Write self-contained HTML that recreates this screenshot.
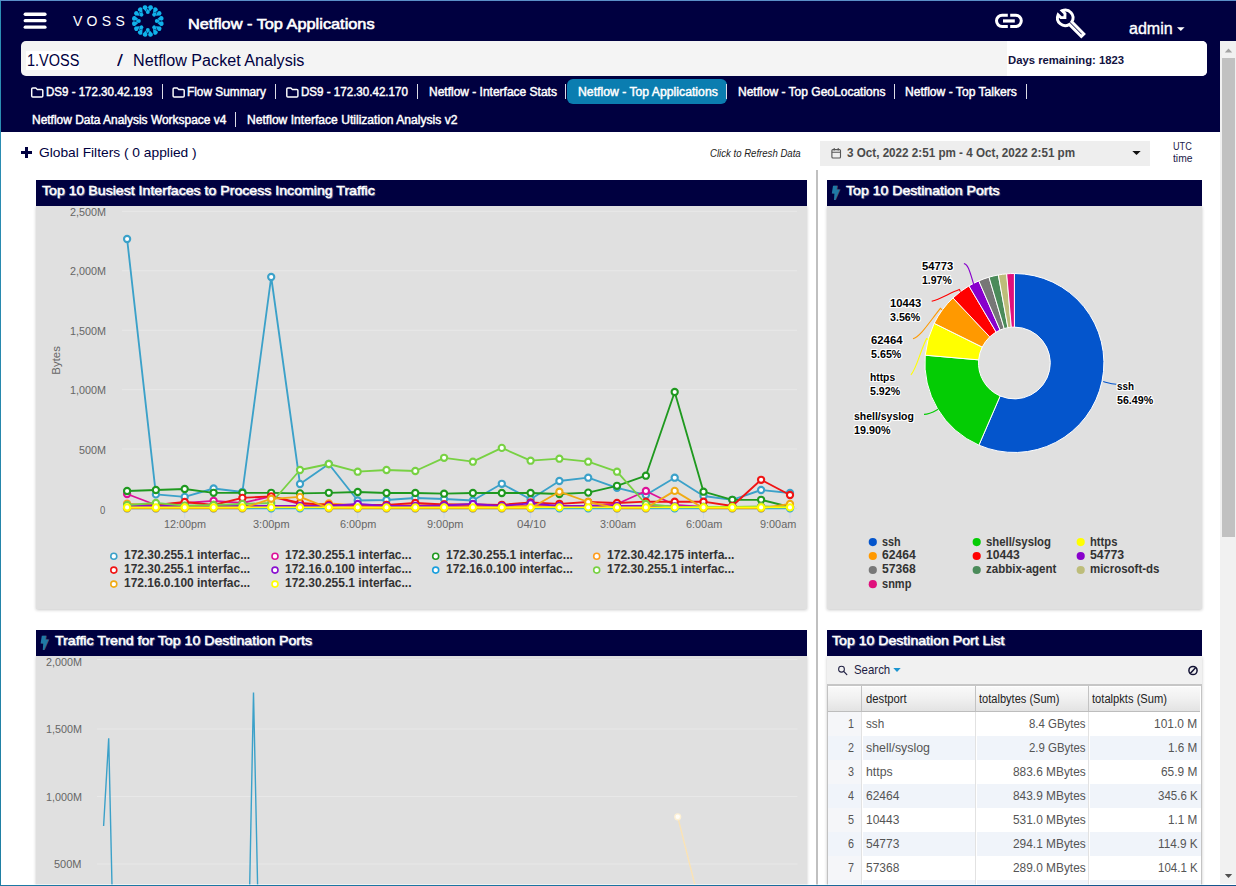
<!DOCTYPE html>
<html>
<head>
<meta charset="utf-8">
<title>Netflow - Top Applications</title>
<style>
*{box-sizing:border-box;margin:0;padding:0}
html,body{width:1236px;height:886px;overflow:hidden;background:#fff}
body{font-family:"Liberation Sans",sans-serif;position:relative;color:#222}
.abs{position:absolute}
.t{position:absolute;white-space:pre;line-height:1;z-index:20}
svg{position:absolute;left:0;top:0;overflow:visible}
svg text{font-family:"Liberation Sans",sans-serif}
.sep{position:absolute;width:1px;background:#dcdce6}
.ptitle{position:absolute;background:#000040;height:26px;z-index:3}
.pbody{position:absolute;background:#e0e0e0;box-shadow:0 1px 3px rgba(0,0,0,.22);z-index:2}
</style>
</head>
<body>
<div class="abs" style="left:1px;top:1px;width:1235px;height:40px;background:#000040"></div>
<div class="abs" style="left:1px;top:41px;width:1220px;height:91px;background:#000040"></div>
<div class="abs" style="left:21px;top:41px;width:1186px;height:35px;background:#f4f4f4;border-radius:5px"></div>
<div class="abs" style="left:1007px;top:41px;width:200px;height:35px;background:#fff;border-radius:0 5px 5px 0"></div>
<div class="abs" style="left:26.1px;top:50.7px;width:53.1px;height:19.1px;background:#fff"></div>
<div class="abs" style="left:567px;top:78.5px;width:160px;height:25px;background:#0b7db0;border-radius:6px"></div>
<div class="sep" style="left:162.0px;top:84px;height:15px"></div>
<div class="sep" style="left:274.8px;top:84px;height:15px"></div>
<div class="sep" style="left:416.9px;top:84px;height:15px"></div>
<div class="sep" style="left:565.4px;top:84px;height:15px"></div>
<div class="sep" style="left:726.1px;top:84px;height:15px"></div>
<div class="sep" style="left:894.3px;top:84px;height:15px"></div>
<div class="sep" style="left:1025.9px;top:84px;height:15px"></div>
<div class="sep" style="left:235.2px;top:112px;height:15px"></div>

<svg width="1236" height="140" style="z-index:5">
  <rect x="23.6" y="12.6" width="23" height="3.3" rx="1.65" fill="#fff"/>
  <rect x="23.6" y="19.05" width="23" height="3.3" rx="1.65" fill="#fff"/>
  <rect x="23.6" y="25.5" width="23" height="3.3" rx="1.65" fill="#fff"/>
  <path d="M149.63 11.78 L152.81 8.13 A2.40 2.40 0 1 0 148.10 7.19 Z" fill="#10b2ea"/>
<path d="M153.02 13.18 L157.35 11.03 A2.40 2.40 0 1 0 153.36 8.36 Z" fill="#10b2ea"/>
<path d="M155.62 15.78 L160.44 15.44 A2.40 2.40 0 1 0 157.77 11.45 Z" fill="#10b2ea"/>
<path d="M157.02 19.17 L161.61 20.70 A2.40 2.40 0 1 0 160.67 15.99 Z" fill="#10b2ea"/>
<path d="M157.02 22.83 L160.67 26.01 A2.40 2.40 0 1 0 161.61 21.30 Z" fill="#10b2ea"/>
<path d="M155.62 26.22 L157.77 30.55 A2.40 2.40 0 1 0 160.44 26.56 Z" fill="#10b2ea"/>
<path d="M153.02 28.82 L153.36 33.64 A2.40 2.40 0 1 0 157.35 30.97 Z" fill="#10b2ea"/>
<path d="M149.63 30.22 L148.10 34.81 A2.40 2.40 0 1 0 152.81 33.87 Z" fill="#10b2ea"/>
<path d="M145.97 30.22 L142.79 33.87 A2.40 2.40 0 1 0 147.50 34.81 Z" fill="#10b2ea"/>
<path d="M142.58 28.82 L138.25 30.97 A2.40 2.40 0 1 0 142.24 33.64 Z" fill="#10b2ea"/>
<path d="M139.98 26.22 L135.16 26.56 A2.40 2.40 0 1 0 137.83 30.55 Z" fill="#10b2ea"/>
<path d="M138.58 22.83 L133.99 21.30 A2.40 2.40 0 1 0 134.93 26.01 Z" fill="#10b2ea"/>
<path d="M138.58 19.17 L134.93 15.99 A2.40 2.40 0 1 0 133.99 20.70 Z" fill="#10b2ea"/>
<path d="M139.98 15.78 L137.83 11.45 A2.40 2.40 0 1 0 135.16 15.44 Z" fill="#10b2ea"/>
<path d="M142.58 13.18 L142.24 8.36 A2.40 2.40 0 1 0 138.25 11.03 Z" fill="#10b2ea"/>
<path d="M145.97 11.78 L147.50 7.19 A2.40 2.40 0 1 0 142.79 8.13 Z" fill="#10b2ea"/>
<path d="M147.80 8.40 L149.80 12.00 A2.00 2.00 0 1 1 145.80 12.00 Z" fill="#10b2ea"/>
<path d="M156.71 12.09 L155.58 16.05 A2.00 2.00 0 1 1 152.75 13.22 Z" fill="#10b2ea"/>
<path d="M160.40 21.00 L156.80 23.00 A2.00 2.00 0 1 1 156.80 19.00 Z" fill="#10b2ea"/>
<path d="M156.71 29.91 L152.75 28.78 A2.00 2.00 0 1 1 155.58 25.95 Z" fill="#10b2ea"/>
<path d="M147.80 33.60 L145.80 30.00 A2.00 2.00 0 1 1 149.80 30.00 Z" fill="#10b2ea"/>
<path d="M138.89 29.91 L140.02 25.95 A2.00 2.00 0 1 1 142.85 28.78 Z" fill="#10b2ea"/>
<path d="M135.20 21.00 L138.80 19.00 A2.00 2.00 0 1 1 138.80 23.00 Z" fill="#10b2ea"/>
<path d="M138.89 12.09 L142.85 13.22 A2.00 2.00 0 1 1 140.02 16.05 Z" fill="#10b2ea"/>
  <g fill="none" stroke="#fff" stroke-width="3" stroke-linecap="butt">
    <path d="M1007.8 15.2 H1002.15 A5.65 5.65 0 0 0 1002.15 26.5 H1007.8"/>
    <path d="M1010.2 15.2 H1015.65 A5.65 5.65 0 0 1 1015.65 26.5 H1010.2"/>
    <path d="M1003 20.95 H1014.8" stroke-width="3.2"/>
  </g>
  <g transform="translate(1065.2 17.8) rotate(-45)">
    <path d="M-2.9 -7.19 L-2.9 -3.2 L0 -0.4 L2.9 -3.2 L2.9 -7.19 A7.75 7.75 0 0 1 1.8 7.54 L1.8 24.6 L-1.8 24.6 L-1.8 7.54 A7.75 7.75 0 0 1 -2.9 -7.19 Z" fill="none" stroke="#fff" stroke-width="2.9" stroke-linejoin="miter"/>
  </g>
  <path d="M1177 27.2 L1184.6 27.2 L1180.8 31 Z" fill="#fff"/>
  <path d="M31.7 89.0 q0 -1.1 1.1 -1.1 h3 l1.3 1.5 h4.6 q1.1 0 1.1 1.1 v5.4 q0 1.1 -1.1 1.1 h-8.9 q-1.1 0 -1.1 -1.1 z" fill="none" stroke="#fff" stroke-width="1.45" stroke-linejoin="round"/>
  <path d="M173.1 89.0 q0 -1.1 1.1 -1.1 h3 l1.3 1.5 h4.6 q1.1 0 1.1 1.1 v5.4 q0 1.1 -1.1 1.1 h-8.9 q-1.1 0 -1.1 -1.1 z" fill="none" stroke="#fff" stroke-width="1.45" stroke-linejoin="round"/>
  <path d="M286.8 89.0 q0 -1.1 1.1 -1.1 h3 l1.3 1.5 h4.6 q1.1 0 1.1 1.1 v5.4 q0 1.1 -1.1 1.1 h-8.9 q-1.1 0 -1.1 -1.1 z" fill="none" stroke="#fff" stroke-width="1.45" stroke-linejoin="round"/>
</svg>
<div class="abs" style="left:21px;top:151.4px;width:11px;height:2.5px;background:#000040"></div>
<div class="abs" style="left:25.3px;top:147.2px;width:2.5px;height:11px;background:#000040"></div>
<div class="abs" style="left:820px;top:140.8px;width:330px;height:25.2px;background:#eeeeee"></div>
<svg width="1236" height="200" style="z-index:6">
  <g fill="none" stroke="#555" stroke-width="1.1">
    <rect x="831.9" y="149.6" width="8.6" height="8.4" rx="1"/>
    <path d="M831.9 152.3 H840.5 M834.2 148 V150.4 M838.2 148 V150.4"/>
  </g>
  <path d="M1132.3 150.9 L1140.7 150.9 L1136.5 155.1 Z" fill="#111"/>
</svg>
<div class="abs" style="left:816.1px;top:170px;width:1.7px;height:716px;background:#c0c0c0"></div>
<div class="pbody" style="left:36px;top:206px;width:771px;height:403px"></div>
<div class="ptitle" style="left:36px;top:180px;width:771px"></div>
<div class="pbody" style="left:827px;top:206px;width:375px;height:403px"></div>
<div class="ptitle" style="left:827px;top:180px;width:375px"></div>
<div class="pbody" style="left:36px;top:656px;width:771px;height:300px"></div>
<div class="ptitle" style="left:36px;top:630px;width:771px"></div>
<div class="pbody" style="left:827px;top:656px;width:375px;height:300px"></div>
<div class="ptitle" style="left:827px;top:630px;width:375px"></div>
<svg width="1236" height="886" style="z-index:6"><path d="M833.8 185.8 L838.0 185.8 L837.4 189.6 L840.6 189.6 L836.0 200.0 L834.8 200.0 L835.2 193.4 L832.6 193.4 Z" fill="#5a4458"/><path d="M833.0 185.8 L837.2 185.8 L836.6 189.6 L839.8 189.6 L835.2 200.0 L834.0 200.0 L834.4 193.4 L831.8 193.4 Z" fill="#1f7aa6"/><path d="M42.6 635.8 L46.8 635.8 L46.2 639.6 L49.4 639.6 L44.8 650.0 L43.6 650.0 L44.0 643.4 L41.4 643.4 Z" fill="#5a4458"/><path d="M41.8 635.8 L46.0 635.8 L45.4 639.6 L48.6 639.6 L44.0 650.0 L42.8 650.0 L43.2 643.4 L40.6 643.4 Z" fill="#1f7aa6"/></svg>
<svg width="1236" height="886" style="z-index:8">
<path d="M122 449.0 H797" stroke="#e8e8e8" stroke-width="1" fill="none"/>
<path d="M122 389.6 H797" stroke="#e8e8e8" stroke-width="1" fill="none"/>
<path d="M122 330.2 H797" stroke="#e8e8e8" stroke-width="1" fill="none"/>
<path d="M122 270.8 H797" stroke="#e8e8e8" stroke-width="1" fill="none"/>
<path d="M122 211.4 H797" stroke="#e8e8e8" stroke-width="1" fill="none"/>
<path d="M122 508.4 H797" stroke="#ccd6eb" stroke-width="1" fill="none"/>
<path d="M184.7 508.4 V518.4" stroke="#ccd6eb" stroke-width="1" fill="none"/>
<path d="M271.2 508.4 V518.4" stroke="#ccd6eb" stroke-width="1" fill="none"/>
<path d="M357.7 508.4 V518.4" stroke="#ccd6eb" stroke-width="1" fill="none"/>
<path d="M444.1 508.4 V518.4" stroke="#ccd6eb" stroke-width="1" fill="none"/>
<path d="M530.6 508.4 V518.4" stroke="#ccd6eb" stroke-width="1" fill="none"/>
<path d="M617.0 508.4 V518.4" stroke="#ccd6eb" stroke-width="1" fill="none"/>
<path d="M703.5 508.4 V518.4" stroke="#ccd6eb" stroke-width="1" fill="none"/>
<path d="M790.0 508.4 V518.4" stroke="#ccd6eb" stroke-width="1" fill="none"/>
<text x="0" y="0" transform="translate(60.4 360.4) rotate(-90)" text-anchor="middle" font-size="11.5" fill="#666" textLength="28.5" lengthAdjust="spacingAndGlyphs">Bytes</text>
<path d="M127.1 239.0 L155.9 494.4 L184.7 496.9 L213.6 488.5 L242.4 492.0 L271.2 277.0 L300.0 484.0 L328.8 464.0 L357.7 500.5 L386.5 500.0 L415.3 498.0 L444.1 499.0 L472.9 500.5 L501.8 483.8 L530.6 499.3 L559.4 481.0 L588.2 477.7 L617.0 487.8 L645.9 495.0 L674.7 477.7 L703.5 496.0 L732.3 499.8 L761.1 490.0 L790.0 493.0" fill="none" stroke="#3ba1c9" stroke-width="1.85" stroke-linejoin="round" stroke-linecap="round"/>
<circle cx="127.1" cy="239.0" r="3.1" fill="#fff" stroke="#3ba1c9" stroke-width="2.1"/>
<circle cx="155.9" cy="494.4" r="3.1" fill="#fff" stroke="#3ba1c9" stroke-width="2.1"/>
<circle cx="184.7" cy="496.9" r="3.1" fill="#fff" stroke="#3ba1c9" stroke-width="2.1"/>
<circle cx="213.6" cy="488.5" r="3.1" fill="#fff" stroke="#3ba1c9" stroke-width="2.1"/>
<circle cx="242.4" cy="492.0" r="3.1" fill="#fff" stroke="#3ba1c9" stroke-width="2.1"/>
<circle cx="271.2" cy="277.0" r="3.1" fill="#fff" stroke="#3ba1c9" stroke-width="2.1"/>
<circle cx="300.0" cy="484.0" r="3.1" fill="#fff" stroke="#3ba1c9" stroke-width="2.1"/>
<circle cx="328.8" cy="464.0" r="3.1" fill="#fff" stroke="#3ba1c9" stroke-width="2.1"/>
<circle cx="357.7" cy="500.5" r="3.1" fill="#fff" stroke="#3ba1c9" stroke-width="2.1"/>
<circle cx="386.5" cy="500.0" r="3.1" fill="#fff" stroke="#3ba1c9" stroke-width="2.1"/>
<circle cx="415.3" cy="498.0" r="3.1" fill="#fff" stroke="#3ba1c9" stroke-width="2.1"/>
<circle cx="444.1" cy="499.0" r="3.1" fill="#fff" stroke="#3ba1c9" stroke-width="2.1"/>
<circle cx="472.9" cy="500.5" r="3.1" fill="#fff" stroke="#3ba1c9" stroke-width="2.1"/>
<circle cx="501.8" cy="483.8" r="3.1" fill="#fff" stroke="#3ba1c9" stroke-width="2.1"/>
<circle cx="530.6" cy="499.3" r="3.1" fill="#fff" stroke="#3ba1c9" stroke-width="2.1"/>
<circle cx="559.4" cy="481.0" r="3.1" fill="#fff" stroke="#3ba1c9" stroke-width="2.1"/>
<circle cx="588.2" cy="477.7" r="3.1" fill="#fff" stroke="#3ba1c9" stroke-width="2.1"/>
<circle cx="617.0" cy="487.8" r="3.1" fill="#fff" stroke="#3ba1c9" stroke-width="2.1"/>
<circle cx="645.9" cy="495.0" r="3.1" fill="#fff" stroke="#3ba1c9" stroke-width="2.1"/>
<circle cx="674.7" cy="477.7" r="3.1" fill="#fff" stroke="#3ba1c9" stroke-width="2.1"/>
<circle cx="703.5" cy="496.0" r="3.1" fill="#fff" stroke="#3ba1c9" stroke-width="2.1"/>
<circle cx="732.3" cy="499.8" r="3.1" fill="#fff" stroke="#3ba1c9" stroke-width="2.1"/>
<circle cx="761.1" cy="490.0" r="3.1" fill="#fff" stroke="#3ba1c9" stroke-width="2.1"/>
<circle cx="790.0" cy="493.0" r="3.1" fill="#fff" stroke="#3ba1c9" stroke-width="2.1"/>
<path d="M127.1 494.0 L155.9 505.0 L184.7 503.0 L213.6 500.8 L242.4 503.0 L271.2 496.3 L300.0 504.0 L328.8 505.5 L357.7 506.0 L386.5 506.0 L415.3 506.0 L444.1 506.0 L472.9 506.0 L501.8 506.0 L530.6 506.0 L559.4 506.0 L588.2 506.0 L617.0 504.0 L645.9 491.0 L674.7 505.0 L703.5 507.0 L732.3 507.0 L761.1 507.0 L790.0 507.0" fill="none" stroke="#dd1199" stroke-width="1.85" stroke-linejoin="round" stroke-linecap="round"/>
<circle cx="127.1" cy="494.0" r="3.1" fill="#fff" stroke="#dd1199" stroke-width="2.1"/>
<circle cx="155.9" cy="505.0" r="3.1" fill="#fff" stroke="#dd1199" stroke-width="2.1"/>
<circle cx="184.7" cy="503.0" r="3.1" fill="#fff" stroke="#dd1199" stroke-width="2.1"/>
<circle cx="213.6" cy="500.8" r="3.1" fill="#fff" stroke="#dd1199" stroke-width="2.1"/>
<circle cx="242.4" cy="503.0" r="3.1" fill="#fff" stroke="#dd1199" stroke-width="2.1"/>
<circle cx="271.2" cy="496.3" r="3.1" fill="#fff" stroke="#dd1199" stroke-width="2.1"/>
<circle cx="300.0" cy="504.0" r="3.1" fill="#fff" stroke="#dd1199" stroke-width="2.1"/>
<circle cx="328.8" cy="505.5" r="3.1" fill="#fff" stroke="#dd1199" stroke-width="2.1"/>
<circle cx="357.7" cy="506.0" r="3.1" fill="#fff" stroke="#dd1199" stroke-width="2.1"/>
<circle cx="386.5" cy="506.0" r="3.1" fill="#fff" stroke="#dd1199" stroke-width="2.1"/>
<circle cx="415.3" cy="506.0" r="3.1" fill="#fff" stroke="#dd1199" stroke-width="2.1"/>
<circle cx="444.1" cy="506.0" r="3.1" fill="#fff" stroke="#dd1199" stroke-width="2.1"/>
<circle cx="472.9" cy="506.0" r="3.1" fill="#fff" stroke="#dd1199" stroke-width="2.1"/>
<circle cx="501.8" cy="506.0" r="3.1" fill="#fff" stroke="#dd1199" stroke-width="2.1"/>
<circle cx="530.6" cy="506.0" r="3.1" fill="#fff" stroke="#dd1199" stroke-width="2.1"/>
<circle cx="559.4" cy="506.0" r="3.1" fill="#fff" stroke="#dd1199" stroke-width="2.1"/>
<circle cx="588.2" cy="506.0" r="3.1" fill="#fff" stroke="#dd1199" stroke-width="2.1"/>
<circle cx="617.0" cy="504.0" r="3.1" fill="#fff" stroke="#dd1199" stroke-width="2.1"/>
<circle cx="645.9" cy="491.0" r="3.1" fill="#fff" stroke="#dd1199" stroke-width="2.1"/>
<circle cx="674.7" cy="505.0" r="3.1" fill="#fff" stroke="#dd1199" stroke-width="2.1"/>
<circle cx="703.5" cy="507.0" r="3.1" fill="#fff" stroke="#dd1199" stroke-width="2.1"/>
<circle cx="732.3" cy="507.0" r="3.1" fill="#fff" stroke="#dd1199" stroke-width="2.1"/>
<circle cx="761.1" cy="507.0" r="3.1" fill="#fff" stroke="#dd1199" stroke-width="2.1"/>
<circle cx="790.0" cy="507.0" r="3.1" fill="#fff" stroke="#dd1199" stroke-width="2.1"/>
<path d="M127.1 491.0 L155.9 490.0 L184.7 489.0 L213.6 492.8 L242.4 492.8 L271.2 492.8 L300.0 493.4 L328.8 492.8 L357.7 492.0 L386.5 493.0 L415.3 493.0 L444.1 493.7 L472.9 493.0 L501.8 493.0 L530.6 493.0 L559.4 494.0 L588.2 492.6 L617.0 485.8 L645.9 475.7 L674.7 392.0 L703.5 491.7 L732.3 499.8 L761.1 499.8 L790.0 507.0" fill="none" stroke="#1f991f" stroke-width="1.85" stroke-linejoin="round" stroke-linecap="round"/>
<circle cx="127.1" cy="491.0" r="3.1" fill="#fff" stroke="#1f991f" stroke-width="2.1"/>
<circle cx="155.9" cy="490.0" r="3.1" fill="#fff" stroke="#1f991f" stroke-width="2.1"/>
<circle cx="184.7" cy="489.0" r="3.1" fill="#fff" stroke="#1f991f" stroke-width="2.1"/>
<circle cx="213.6" cy="492.8" r="3.1" fill="#fff" stroke="#1f991f" stroke-width="2.1"/>
<circle cx="242.4" cy="492.8" r="3.1" fill="#fff" stroke="#1f991f" stroke-width="2.1"/>
<circle cx="271.2" cy="492.8" r="3.1" fill="#fff" stroke="#1f991f" stroke-width="2.1"/>
<circle cx="300.0" cy="493.4" r="3.1" fill="#fff" stroke="#1f991f" stroke-width="2.1"/>
<circle cx="328.8" cy="492.8" r="3.1" fill="#fff" stroke="#1f991f" stroke-width="2.1"/>
<circle cx="357.7" cy="492.0" r="3.1" fill="#fff" stroke="#1f991f" stroke-width="2.1"/>
<circle cx="386.5" cy="493.0" r="3.1" fill="#fff" stroke="#1f991f" stroke-width="2.1"/>
<circle cx="415.3" cy="493.0" r="3.1" fill="#fff" stroke="#1f991f" stroke-width="2.1"/>
<circle cx="444.1" cy="493.7" r="3.1" fill="#fff" stroke="#1f991f" stroke-width="2.1"/>
<circle cx="472.9" cy="493.0" r="3.1" fill="#fff" stroke="#1f991f" stroke-width="2.1"/>
<circle cx="501.8" cy="493.0" r="3.1" fill="#fff" stroke="#1f991f" stroke-width="2.1"/>
<circle cx="530.6" cy="493.0" r="3.1" fill="#fff" stroke="#1f991f" stroke-width="2.1"/>
<circle cx="559.4" cy="494.0" r="3.1" fill="#fff" stroke="#1f991f" stroke-width="2.1"/>
<circle cx="588.2" cy="492.6" r="3.1" fill="#fff" stroke="#1f991f" stroke-width="2.1"/>
<circle cx="617.0" cy="485.8" r="3.1" fill="#fff" stroke="#1f991f" stroke-width="2.1"/>
<circle cx="645.9" cy="475.7" r="3.1" fill="#fff" stroke="#1f991f" stroke-width="2.1"/>
<circle cx="674.7" cy="392.0" r="3.1" fill="#fff" stroke="#1f991f" stroke-width="2.1"/>
<circle cx="703.5" cy="491.7" r="3.1" fill="#fff" stroke="#1f991f" stroke-width="2.1"/>
<circle cx="732.3" cy="499.8" r="3.1" fill="#fff" stroke="#1f991f" stroke-width="2.1"/>
<circle cx="761.1" cy="499.8" r="3.1" fill="#fff" stroke="#1f991f" stroke-width="2.1"/>
<circle cx="790.0" cy="507.0" r="3.1" fill="#fff" stroke="#1f991f" stroke-width="2.1"/>
<path d="M127.1 503.7 L155.9 506.0 L184.7 506.0 L213.6 506.0 L242.4 506.0 L271.2 506.0 L300.0 506.0 L328.8 503.5 L357.7 505.5 L386.5 505.0 L415.3 505.5 L444.1 504.5 L472.9 505.5 L501.8 505.5 L530.6 506.5 L559.4 506.5 L588.2 506.5 L617.0 507.0 L645.9 507.0 L674.7 507.0 L703.5 507.0 L732.3 507.0 L761.1 507.0 L790.0 507.0" fill="none" stroke="#ff9d1e" stroke-width="1.85" stroke-linejoin="round" stroke-linecap="round"/>
<circle cx="127.1" cy="503.7" r="3.1" fill="#fff" stroke="#ff9d1e" stroke-width="2.1"/>
<circle cx="155.9" cy="506.0" r="3.1" fill="#fff" stroke="#ff9d1e" stroke-width="2.1"/>
<circle cx="184.7" cy="506.0" r="3.1" fill="#fff" stroke="#ff9d1e" stroke-width="2.1"/>
<circle cx="213.6" cy="506.0" r="3.1" fill="#fff" stroke="#ff9d1e" stroke-width="2.1"/>
<circle cx="242.4" cy="506.0" r="3.1" fill="#fff" stroke="#ff9d1e" stroke-width="2.1"/>
<circle cx="271.2" cy="506.0" r="3.1" fill="#fff" stroke="#ff9d1e" stroke-width="2.1"/>
<circle cx="300.0" cy="506.0" r="3.1" fill="#fff" stroke="#ff9d1e" stroke-width="2.1"/>
<circle cx="328.8" cy="503.5" r="3.1" fill="#fff" stroke="#ff9d1e" stroke-width="2.1"/>
<circle cx="357.7" cy="505.5" r="3.1" fill="#fff" stroke="#ff9d1e" stroke-width="2.1"/>
<circle cx="386.5" cy="505.0" r="3.1" fill="#fff" stroke="#ff9d1e" stroke-width="2.1"/>
<circle cx="415.3" cy="505.5" r="3.1" fill="#fff" stroke="#ff9d1e" stroke-width="2.1"/>
<circle cx="444.1" cy="504.5" r="3.1" fill="#fff" stroke="#ff9d1e" stroke-width="2.1"/>
<circle cx="472.9" cy="505.5" r="3.1" fill="#fff" stroke="#ff9d1e" stroke-width="2.1"/>
<circle cx="501.8" cy="505.5" r="3.1" fill="#fff" stroke="#ff9d1e" stroke-width="2.1"/>
<circle cx="530.6" cy="506.5" r="3.1" fill="#fff" stroke="#ff9d1e" stroke-width="2.1"/>
<circle cx="559.4" cy="506.5" r="3.1" fill="#fff" stroke="#ff9d1e" stroke-width="2.1"/>
<circle cx="588.2" cy="506.5" r="3.1" fill="#fff" stroke="#ff9d1e" stroke-width="2.1"/>
<circle cx="617.0" cy="507.0" r="3.1" fill="#fff" stroke="#ff9d1e" stroke-width="2.1"/>
<circle cx="645.9" cy="507.0" r="3.1" fill="#fff" stroke="#ff9d1e" stroke-width="2.1"/>
<circle cx="674.7" cy="507.0" r="3.1" fill="#fff" stroke="#ff9d1e" stroke-width="2.1"/>
<circle cx="703.5" cy="507.0" r="3.1" fill="#fff" stroke="#ff9d1e" stroke-width="2.1"/>
<circle cx="732.3" cy="507.0" r="3.1" fill="#fff" stroke="#ff9d1e" stroke-width="2.1"/>
<circle cx="761.1" cy="507.0" r="3.1" fill="#fff" stroke="#ff9d1e" stroke-width="2.1"/>
<circle cx="790.0" cy="507.0" r="3.1" fill="#fff" stroke="#ff9d1e" stroke-width="2.1"/>
<path d="M127.1 505.6 L155.9 505.0 L184.7 502.0 L213.6 505.0 L242.4 497.9 L271.2 496.3 L300.0 503.0 L328.8 505.0 L357.7 504.8 L386.5 504.8 L415.3 503.0 L444.1 504.5 L472.9 504.5 L501.8 504.8 L530.6 502.4 L559.4 503.8 L588.2 502.0 L617.0 503.0 L645.9 501.7 L674.7 501.7 L703.5 501.7 L732.3 506.0 L761.1 479.8 L790.0 495.0" fill="none" stroke="#f01414" stroke-width="1.85" stroke-linejoin="round" stroke-linecap="round"/>
<circle cx="127.1" cy="505.6" r="3.1" fill="#fff" stroke="#f01414" stroke-width="2.1"/>
<circle cx="155.9" cy="505.0" r="3.1" fill="#fff" stroke="#f01414" stroke-width="2.1"/>
<circle cx="184.7" cy="502.0" r="3.1" fill="#fff" stroke="#f01414" stroke-width="2.1"/>
<circle cx="213.6" cy="505.0" r="3.1" fill="#fff" stroke="#f01414" stroke-width="2.1"/>
<circle cx="242.4" cy="497.9" r="3.1" fill="#fff" stroke="#f01414" stroke-width="2.1"/>
<circle cx="271.2" cy="496.3" r="3.1" fill="#fff" stroke="#f01414" stroke-width="2.1"/>
<circle cx="300.0" cy="503.0" r="3.1" fill="#fff" stroke="#f01414" stroke-width="2.1"/>
<circle cx="328.8" cy="505.0" r="3.1" fill="#fff" stroke="#f01414" stroke-width="2.1"/>
<circle cx="357.7" cy="504.8" r="3.1" fill="#fff" stroke="#f01414" stroke-width="2.1"/>
<circle cx="386.5" cy="504.8" r="3.1" fill="#fff" stroke="#f01414" stroke-width="2.1"/>
<circle cx="415.3" cy="503.0" r="3.1" fill="#fff" stroke="#f01414" stroke-width="2.1"/>
<circle cx="444.1" cy="504.5" r="3.1" fill="#fff" stroke="#f01414" stroke-width="2.1"/>
<circle cx="472.9" cy="504.5" r="3.1" fill="#fff" stroke="#f01414" stroke-width="2.1"/>
<circle cx="501.8" cy="504.8" r="3.1" fill="#fff" stroke="#f01414" stroke-width="2.1"/>
<circle cx="530.6" cy="502.4" r="3.1" fill="#fff" stroke="#f01414" stroke-width="2.1"/>
<circle cx="559.4" cy="503.8" r="3.1" fill="#fff" stroke="#f01414" stroke-width="2.1"/>
<circle cx="588.2" cy="502.0" r="3.1" fill="#fff" stroke="#f01414" stroke-width="2.1"/>
<circle cx="617.0" cy="503.0" r="3.1" fill="#fff" stroke="#f01414" stroke-width="2.1"/>
<circle cx="645.9" cy="501.7" r="3.1" fill="#fff" stroke="#f01414" stroke-width="2.1"/>
<circle cx="674.7" cy="501.7" r="3.1" fill="#fff" stroke="#f01414" stroke-width="2.1"/>
<circle cx="703.5" cy="501.7" r="3.1" fill="#fff" stroke="#f01414" stroke-width="2.1"/>
<circle cx="732.3" cy="506.0" r="3.1" fill="#fff" stroke="#f01414" stroke-width="2.1"/>
<circle cx="761.1" cy="479.8" r="3.1" fill="#fff" stroke="#f01414" stroke-width="2.1"/>
<circle cx="790.0" cy="495.0" r="3.1" fill="#fff" stroke="#f01414" stroke-width="2.1"/>
<path d="M127.1 506.0 L155.9 506.0 L184.7 506.0 L213.6 506.0 L242.4 506.0 L271.2 506.0 L300.0 506.0 L328.8 506.0 L357.7 504.0 L386.5 506.0 L415.3 506.0 L444.1 505.5 L472.9 504.0 L501.8 506.0 L530.6 503.4 L559.4 506.0 L588.2 506.0 L617.0 506.0 L645.9 506.0 L674.7 506.5 L703.5 507.0 L732.3 507.0 L761.1 507.0 L790.0 507.0" fill="none" stroke="#8a0fd0" stroke-width="1.85" stroke-linejoin="round" stroke-linecap="round"/>
<circle cx="127.1" cy="506.0" r="3.1" fill="#fff" stroke="#8a0fd0" stroke-width="2.1"/>
<circle cx="155.9" cy="506.0" r="3.1" fill="#fff" stroke="#8a0fd0" stroke-width="2.1"/>
<circle cx="184.7" cy="506.0" r="3.1" fill="#fff" stroke="#8a0fd0" stroke-width="2.1"/>
<circle cx="213.6" cy="506.0" r="3.1" fill="#fff" stroke="#8a0fd0" stroke-width="2.1"/>
<circle cx="242.4" cy="506.0" r="3.1" fill="#fff" stroke="#8a0fd0" stroke-width="2.1"/>
<circle cx="271.2" cy="506.0" r="3.1" fill="#fff" stroke="#8a0fd0" stroke-width="2.1"/>
<circle cx="300.0" cy="506.0" r="3.1" fill="#fff" stroke="#8a0fd0" stroke-width="2.1"/>
<circle cx="328.8" cy="506.0" r="3.1" fill="#fff" stroke="#8a0fd0" stroke-width="2.1"/>
<circle cx="357.7" cy="504.0" r="3.1" fill="#fff" stroke="#8a0fd0" stroke-width="2.1"/>
<circle cx="386.5" cy="506.0" r="3.1" fill="#fff" stroke="#8a0fd0" stroke-width="2.1"/>
<circle cx="415.3" cy="506.0" r="3.1" fill="#fff" stroke="#8a0fd0" stroke-width="2.1"/>
<circle cx="444.1" cy="505.5" r="3.1" fill="#fff" stroke="#8a0fd0" stroke-width="2.1"/>
<circle cx="472.9" cy="504.0" r="3.1" fill="#fff" stroke="#8a0fd0" stroke-width="2.1"/>
<circle cx="501.8" cy="506.0" r="3.1" fill="#fff" stroke="#8a0fd0" stroke-width="2.1"/>
<circle cx="530.6" cy="503.4" r="3.1" fill="#fff" stroke="#8a0fd0" stroke-width="2.1"/>
<circle cx="559.4" cy="506.0" r="3.1" fill="#fff" stroke="#8a0fd0" stroke-width="2.1"/>
<circle cx="588.2" cy="506.0" r="3.1" fill="#fff" stroke="#8a0fd0" stroke-width="2.1"/>
<circle cx="617.0" cy="506.0" r="3.1" fill="#fff" stroke="#8a0fd0" stroke-width="2.1"/>
<circle cx="645.9" cy="506.0" r="3.1" fill="#fff" stroke="#8a0fd0" stroke-width="2.1"/>
<circle cx="674.7" cy="506.5" r="3.1" fill="#fff" stroke="#8a0fd0" stroke-width="2.1"/>
<circle cx="703.5" cy="507.0" r="3.1" fill="#fff" stroke="#8a0fd0" stroke-width="2.1"/>
<circle cx="732.3" cy="507.0" r="3.1" fill="#fff" stroke="#8a0fd0" stroke-width="2.1"/>
<circle cx="761.1" cy="507.0" r="3.1" fill="#fff" stroke="#8a0fd0" stroke-width="2.1"/>
<circle cx="790.0" cy="507.0" r="3.1" fill="#fff" stroke="#8a0fd0" stroke-width="2.1"/>
<path d="M127.1 508.3 L155.9 508.3 L184.7 508.3 L213.6 508.3 L242.4 508.3 L271.2 508.3 L300.0 508.3 L328.8 508.3 L357.7 508.3 L386.5 508.3 L415.3 508.3 L444.1 508.3 L472.9 508.3 L501.8 508.3 L530.6 508.3 L559.4 508.3 L588.2 508.3 L617.0 508.3 L645.9 508.3 L674.7 508.3 L703.5 508.3 L732.3 508.3 L761.1 508.3 L790.0 508.3" fill="none" stroke="#1b9fdd" stroke-width="1.85" stroke-linejoin="round" stroke-linecap="round"/>
<circle cx="127.1" cy="508.3" r="3.1" fill="#fff" stroke="#1b9fdd" stroke-width="2.1"/>
<circle cx="155.9" cy="508.3" r="3.1" fill="#fff" stroke="#1b9fdd" stroke-width="2.1"/>
<circle cx="184.7" cy="508.3" r="3.1" fill="#fff" stroke="#1b9fdd" stroke-width="2.1"/>
<circle cx="213.6" cy="508.3" r="3.1" fill="#fff" stroke="#1b9fdd" stroke-width="2.1"/>
<circle cx="242.4" cy="508.3" r="3.1" fill="#fff" stroke="#1b9fdd" stroke-width="2.1"/>
<circle cx="271.2" cy="508.3" r="3.1" fill="#fff" stroke="#1b9fdd" stroke-width="2.1"/>
<circle cx="300.0" cy="508.3" r="3.1" fill="#fff" stroke="#1b9fdd" stroke-width="2.1"/>
<circle cx="328.8" cy="508.3" r="3.1" fill="#fff" stroke="#1b9fdd" stroke-width="2.1"/>
<circle cx="357.7" cy="508.3" r="3.1" fill="#fff" stroke="#1b9fdd" stroke-width="2.1"/>
<circle cx="386.5" cy="508.3" r="3.1" fill="#fff" stroke="#1b9fdd" stroke-width="2.1"/>
<circle cx="415.3" cy="508.3" r="3.1" fill="#fff" stroke="#1b9fdd" stroke-width="2.1"/>
<circle cx="444.1" cy="508.3" r="3.1" fill="#fff" stroke="#1b9fdd" stroke-width="2.1"/>
<circle cx="472.9" cy="508.3" r="3.1" fill="#fff" stroke="#1b9fdd" stroke-width="2.1"/>
<circle cx="501.8" cy="508.3" r="3.1" fill="#fff" stroke="#1b9fdd" stroke-width="2.1"/>
<circle cx="530.6" cy="508.3" r="3.1" fill="#fff" stroke="#1b9fdd" stroke-width="2.1"/>
<circle cx="559.4" cy="508.3" r="3.1" fill="#fff" stroke="#1b9fdd" stroke-width="2.1"/>
<circle cx="588.2" cy="508.3" r="3.1" fill="#fff" stroke="#1b9fdd" stroke-width="2.1"/>
<circle cx="617.0" cy="508.3" r="3.1" fill="#fff" stroke="#1b9fdd" stroke-width="2.1"/>
<circle cx="645.9" cy="508.3" r="3.1" fill="#fff" stroke="#1b9fdd" stroke-width="2.1"/>
<circle cx="674.7" cy="508.3" r="3.1" fill="#fff" stroke="#1b9fdd" stroke-width="2.1"/>
<circle cx="703.5" cy="508.3" r="3.1" fill="#fff" stroke="#1b9fdd" stroke-width="2.1"/>
<circle cx="732.3" cy="508.3" r="3.1" fill="#fff" stroke="#1b9fdd" stroke-width="2.1"/>
<circle cx="761.1" cy="508.3" r="3.1" fill="#fff" stroke="#1b9fdd" stroke-width="2.1"/>
<circle cx="790.0" cy="508.3" r="3.1" fill="#fff" stroke="#1b9fdd" stroke-width="2.1"/>
<path d="M127.1 505.0 L155.9 503.0 L184.7 505.6 L213.6 505.0 L242.4 504.0 L271.2 503.0 L300.0 470.0 L328.8 464.0 L357.7 471.7 L386.5 470.0 L415.3 471.0 L444.1 457.8 L472.9 461.7 L501.8 447.9 L530.6 460.7 L559.4 458.7 L588.2 461.7 L617.0 471.7 L645.9 504.0 L674.7 507.0 L703.5 507.0 L732.3 507.0 L761.1 506.5 L790.0 507.0" fill="none" stroke="#78d143" stroke-width="1.85" stroke-linejoin="round" stroke-linecap="round"/>
<circle cx="127.1" cy="505.0" r="3.1" fill="#fff" stroke="#78d143" stroke-width="2.1"/>
<circle cx="155.9" cy="503.0" r="3.1" fill="#fff" stroke="#78d143" stroke-width="2.1"/>
<circle cx="184.7" cy="505.6" r="3.1" fill="#fff" stroke="#78d143" stroke-width="2.1"/>
<circle cx="213.6" cy="505.0" r="3.1" fill="#fff" stroke="#78d143" stroke-width="2.1"/>
<circle cx="242.4" cy="504.0" r="3.1" fill="#fff" stroke="#78d143" stroke-width="2.1"/>
<circle cx="271.2" cy="503.0" r="3.1" fill="#fff" stroke="#78d143" stroke-width="2.1"/>
<circle cx="300.0" cy="470.0" r="3.1" fill="#fff" stroke="#78d143" stroke-width="2.1"/>
<circle cx="328.8" cy="464.0" r="3.1" fill="#fff" stroke="#78d143" stroke-width="2.1"/>
<circle cx="357.7" cy="471.7" r="3.1" fill="#fff" stroke="#78d143" stroke-width="2.1"/>
<circle cx="386.5" cy="470.0" r="3.1" fill="#fff" stroke="#78d143" stroke-width="2.1"/>
<circle cx="415.3" cy="471.0" r="3.1" fill="#fff" stroke="#78d143" stroke-width="2.1"/>
<circle cx="444.1" cy="457.8" r="3.1" fill="#fff" stroke="#78d143" stroke-width="2.1"/>
<circle cx="472.9" cy="461.7" r="3.1" fill="#fff" stroke="#78d143" stroke-width="2.1"/>
<circle cx="501.8" cy="447.9" r="3.1" fill="#fff" stroke="#78d143" stroke-width="2.1"/>
<circle cx="530.6" cy="460.7" r="3.1" fill="#fff" stroke="#78d143" stroke-width="2.1"/>
<circle cx="559.4" cy="458.7" r="3.1" fill="#fff" stroke="#78d143" stroke-width="2.1"/>
<circle cx="588.2" cy="461.7" r="3.1" fill="#fff" stroke="#78d143" stroke-width="2.1"/>
<circle cx="617.0" cy="471.7" r="3.1" fill="#fff" stroke="#78d143" stroke-width="2.1"/>
<circle cx="645.9" cy="504.0" r="3.1" fill="#fff" stroke="#78d143" stroke-width="2.1"/>
<circle cx="674.7" cy="507.0" r="3.1" fill="#fff" stroke="#78d143" stroke-width="2.1"/>
<circle cx="703.5" cy="507.0" r="3.1" fill="#fff" stroke="#78d143" stroke-width="2.1"/>
<circle cx="732.3" cy="507.0" r="3.1" fill="#fff" stroke="#78d143" stroke-width="2.1"/>
<circle cx="761.1" cy="506.5" r="3.1" fill="#fff" stroke="#78d143" stroke-width="2.1"/>
<circle cx="790.0" cy="507.0" r="3.1" fill="#fff" stroke="#78d143" stroke-width="2.1"/>
<path d="M127.1 508.2 L155.9 508.2 L184.7 508.2 L213.6 508.2 L242.4 508.2 L271.2 498.8 L300.0 496.9 L328.8 508.2 L357.7 508.2 L386.5 508.2 L415.3 508.2 L444.1 508.2 L472.9 508.2 L501.8 508.2 L530.6 508.2 L559.4 491.7 L588.2 502.0 L617.0 508.2 L645.9 508.2 L674.7 490.9 L703.5 508.2 L732.3 508.2 L761.1 508.2 L790.0 504.0" fill="none" stroke="#f0aa14" stroke-width="1.85" stroke-linejoin="round" stroke-linecap="round"/>
<circle cx="127.1" cy="508.2" r="3.1" fill="#fff" stroke="#f0aa14" stroke-width="2.1"/>
<circle cx="155.9" cy="508.2" r="3.1" fill="#fff" stroke="#f0aa14" stroke-width="2.1"/>
<circle cx="184.7" cy="508.2" r="3.1" fill="#fff" stroke="#f0aa14" stroke-width="2.1"/>
<circle cx="213.6" cy="508.2" r="3.1" fill="#fff" stroke="#f0aa14" stroke-width="2.1"/>
<circle cx="242.4" cy="508.2" r="3.1" fill="#fff" stroke="#f0aa14" stroke-width="2.1"/>
<circle cx="271.2" cy="498.8" r="3.1" fill="#fff" stroke="#f0aa14" stroke-width="2.1"/>
<circle cx="300.0" cy="496.9" r="3.1" fill="#fff" stroke="#f0aa14" stroke-width="2.1"/>
<circle cx="328.8" cy="508.2" r="3.1" fill="#fff" stroke="#f0aa14" stroke-width="2.1"/>
<circle cx="357.7" cy="508.2" r="3.1" fill="#fff" stroke="#f0aa14" stroke-width="2.1"/>
<circle cx="386.5" cy="508.2" r="3.1" fill="#fff" stroke="#f0aa14" stroke-width="2.1"/>
<circle cx="415.3" cy="508.2" r="3.1" fill="#fff" stroke="#f0aa14" stroke-width="2.1"/>
<circle cx="444.1" cy="508.2" r="3.1" fill="#fff" stroke="#f0aa14" stroke-width="2.1"/>
<circle cx="472.9" cy="508.2" r="3.1" fill="#fff" stroke="#f0aa14" stroke-width="2.1"/>
<circle cx="501.8" cy="508.2" r="3.1" fill="#fff" stroke="#f0aa14" stroke-width="2.1"/>
<circle cx="530.6" cy="508.2" r="3.1" fill="#fff" stroke="#f0aa14" stroke-width="2.1"/>
<circle cx="559.4" cy="491.7" r="3.1" fill="#fff" stroke="#f0aa14" stroke-width="2.1"/>
<circle cx="588.2" cy="502.0" r="3.1" fill="#fff" stroke="#f0aa14" stroke-width="2.1"/>
<circle cx="617.0" cy="508.2" r="3.1" fill="#fff" stroke="#f0aa14" stroke-width="2.1"/>
<circle cx="645.9" cy="508.2" r="3.1" fill="#fff" stroke="#f0aa14" stroke-width="2.1"/>
<circle cx="674.7" cy="490.9" r="3.1" fill="#fff" stroke="#f0aa14" stroke-width="2.1"/>
<circle cx="703.5" cy="508.2" r="3.1" fill="#fff" stroke="#f0aa14" stroke-width="2.1"/>
<circle cx="732.3" cy="508.2" r="3.1" fill="#fff" stroke="#f0aa14" stroke-width="2.1"/>
<circle cx="761.1" cy="508.2" r="3.1" fill="#fff" stroke="#f0aa14" stroke-width="2.1"/>
<circle cx="790.0" cy="504.0" r="3.1" fill="#fff" stroke="#f0aa14" stroke-width="2.1"/>
<path d="M127.1 507.4 L155.9 507.4 L184.7 507.4 L213.6 507.4 L242.4 507.4 L271.2 507.4 L300.0 507.4 L328.8 507.4 L357.7 507.4 L386.5 507.4 L415.3 507.4 L444.1 507.4 L472.9 507.4 L501.8 507.4 L530.6 507.4 L559.4 507.4 L588.2 507.4 L617.0 507.4 L645.9 507.4 L674.7 507.4 L703.5 507.4 L732.3 507.4 L761.1 507.4 L790.0 507.4" fill="none" stroke="#ffff00" stroke-width="1.85" stroke-linejoin="round" stroke-linecap="round"/>
<circle cx="127.1" cy="507.4" r="3.1" fill="#fff" stroke="#ffff00" stroke-width="2.1"/>
<circle cx="155.9" cy="507.4" r="3.1" fill="#fff" stroke="#ffff00" stroke-width="2.1"/>
<circle cx="184.7" cy="507.4" r="3.1" fill="#fff" stroke="#ffff00" stroke-width="2.1"/>
<circle cx="213.6" cy="507.4" r="3.1" fill="#fff" stroke="#ffff00" stroke-width="2.1"/>
<circle cx="242.4" cy="507.4" r="3.1" fill="#fff" stroke="#ffff00" stroke-width="2.1"/>
<circle cx="271.2" cy="507.4" r="3.1" fill="#fff" stroke="#ffff00" stroke-width="2.1"/>
<circle cx="300.0" cy="507.4" r="3.1" fill="#fff" stroke="#ffff00" stroke-width="2.1"/>
<circle cx="328.8" cy="507.4" r="3.1" fill="#fff" stroke="#ffff00" stroke-width="2.1"/>
<circle cx="357.7" cy="507.4" r="3.1" fill="#fff" stroke="#ffff00" stroke-width="2.1"/>
<circle cx="386.5" cy="507.4" r="3.1" fill="#fff" stroke="#ffff00" stroke-width="2.1"/>
<circle cx="415.3" cy="507.4" r="3.1" fill="#fff" stroke="#ffff00" stroke-width="2.1"/>
<circle cx="444.1" cy="507.4" r="3.1" fill="#fff" stroke="#ffff00" stroke-width="2.1"/>
<circle cx="472.9" cy="507.4" r="3.1" fill="#fff" stroke="#ffff00" stroke-width="2.1"/>
<circle cx="501.8" cy="507.4" r="3.1" fill="#fff" stroke="#ffff00" stroke-width="2.1"/>
<circle cx="530.6" cy="507.4" r="3.1" fill="#fff" stroke="#ffff00" stroke-width="2.1"/>
<circle cx="559.4" cy="507.4" r="3.1" fill="#fff" stroke="#ffff00" stroke-width="2.1"/>
<circle cx="588.2" cy="507.4" r="3.1" fill="#fff" stroke="#ffff00" stroke-width="2.1"/>
<circle cx="617.0" cy="507.4" r="3.1" fill="#fff" stroke="#ffff00" stroke-width="2.1"/>
<circle cx="645.9" cy="507.4" r="3.1" fill="#fff" stroke="#ffff00" stroke-width="2.1"/>
<circle cx="674.7" cy="507.4" r="3.1" fill="#fff" stroke="#ffff00" stroke-width="2.1"/>
<circle cx="703.5" cy="507.4" r="3.1" fill="#fff" stroke="#ffff00" stroke-width="2.1"/>
<circle cx="732.3" cy="507.4" r="3.1" fill="#fff" stroke="#ffff00" stroke-width="2.1"/>
<circle cx="761.1" cy="507.4" r="3.1" fill="#fff" stroke="#ffff00" stroke-width="2.1"/>
<circle cx="790.0" cy="507.4" r="3.1" fill="#fff" stroke="#ffff00" stroke-width="2.1"/>
<circle cx="113.8" cy="556.3" r="3.0" fill="#fff" stroke="#3ba1c9" stroke-width="1.6"/>
<circle cx="275.0" cy="556.3" r="3.0" fill="#fff" stroke="#dd1199" stroke-width="1.6"/>
<circle cx="435.7" cy="556.3" r="3.0" fill="#fff" stroke="#1f991f" stroke-width="1.6"/>
<circle cx="596.7" cy="556.3" r="3.0" fill="#fff" stroke="#ff9d1e" stroke-width="1.6"/>
<circle cx="113.8" cy="570.1" r="3.0" fill="#fff" stroke="#f01414" stroke-width="1.6"/>
<circle cx="275.0" cy="570.1" r="3.0" fill="#fff" stroke="#8a0fd0" stroke-width="1.6"/>
<circle cx="435.7" cy="570.1" r="3.0" fill="#fff" stroke="#1b9fdd" stroke-width="1.6"/>
<circle cx="596.7" cy="570.1" r="3.0" fill="#fff" stroke="#78d143" stroke-width="1.6"/>
<circle cx="113.8" cy="584.1" r="3.0" fill="#fff" stroke="#f0aa14" stroke-width="1.6"/>
<circle cx="275.0" cy="584.1" r="3.0" fill="#fff" stroke="#ffff00" stroke-width="1.6"/>
</svg>
<svg width="1236" height="886" style="z-index:8">
<path d="M1014.40 273.50 A89.5 89.5 0 1 1 978.91 445.16 L1000.16 395.96 A35.9 35.9 0 1 0 1014.40 327.10 Z" fill="#0455cc" stroke="#fff" stroke-width="1" stroke-linejoin="round"/>
<path d="M978.91 445.16 A89.5 89.5 0 0 1 925.24 355.19 L978.64 359.87 A35.9 35.9 0 0 0 1000.16 395.96 Z" fill="#04cc04" stroke="#fff" stroke-width="1" stroke-linejoin="round"/>
<path d="M925.24 355.19 A89.5 89.5 0 0 1 934.18 323.32 L982.22 347.08 A35.9 35.9 0 0 0 978.64 359.87 Z" fill="#ffff00" stroke="#fff" stroke-width="1" stroke-linejoin="round"/>
<path d="M934.18 323.32 A89.5 89.5 0 0 1 952.97 297.91 L989.76 336.89 A35.9 35.9 0 0 0 982.22 347.08 Z" fill="#ff9900" stroke="#fff" stroke-width="1" stroke-linejoin="round"/>
<path d="M952.97 297.91 A89.5 89.5 0 0 1 968.94 285.91 L996.16 332.08 A35.9 35.9 0 0 0 989.76 336.89 Z" fill="#ff0000" stroke="#fff" stroke-width="1" stroke-linejoin="round"/>
<path d="M968.94 285.91 A89.5 89.5 0 0 1 978.80 280.88 L1000.12 330.06 A35.9 35.9 0 0 0 996.16 332.08 Z" fill="#8800cc" stroke="#fff" stroke-width="1" stroke-linejoin="round"/>
<path d="M978.80 280.88 A89.5 89.5 0 0 1 989.03 277.17 L1004.22 328.57 A35.9 35.9 0 0 0 1000.12 330.06 Z" fill="#777777" stroke="#fff" stroke-width="1" stroke-linejoin="round"/>
<path d="M989.03 277.17 A89.5 89.5 0 0 1 998.33 274.96 L1007.95 327.68 A35.9 35.9 0 0 0 1004.22 328.57 Z" fill="#4b8b5a" stroke="#fff" stroke-width="1" stroke-linejoin="round"/>
<path d="M998.33 274.96 A89.5 89.5 0 0 1 1006.68 273.83 L1011.30 327.23 A35.9 35.9 0 0 0 1007.95 327.68 Z" fill="#bdbd7a" stroke="#fff" stroke-width="1" stroke-linejoin="round"/>
<path d="M1006.68 273.83 A89.5 89.5 0 0 1 1014.40 273.50 L1014.40 327.10 A35.9 35.9 0 0 0 1011.30 327.23 Z" fill="#e0107c" stroke="#fff" stroke-width="1" stroke-linejoin="round"/>
<path d="M1116.4 384.3 C1111 384.3 1108 382.8 1103.2 381.5" fill="none" stroke="#0455cc" stroke-width="1.1"/>
<path d="M924.0 414.4 C929.6 414.4 932.6 412.4 938.0 409.3" fill="none" stroke="#04cc04" stroke-width="1.1"/>
<path d="M910.9 374.8 C916 370 920 352 926.6 338.6 L928.0 339.2" fill="none" stroke="#ffff00" stroke-width="1.1"/>
<path d="M913.0 338.8 C920 337.2 929 322.5 940.4 308.4 L942.0 309.9" fill="none" stroke="#ff9900" stroke-width="1.1"/>
<path d="M931.7 301.3 C940 299 950 293 959.3 289.5 L960.4 291.6" fill="none" stroke="#ff0000" stroke-width="1.1"/>
<path d="M963.9 263.6 C968 264 970 272 973.6 284" fill="none" stroke="#8800cc" stroke-width="1.1"/>
<circle cx="872.8" cy="542.1" r="4.1" fill="#0455cc"/>
<circle cx="976.7" cy="542.1" r="4.1" fill="#04cc04"/>
<circle cx="1080.7" cy="542.1" r="4.1" fill="#ffff00"/>
<circle cx="872.8" cy="556.0" r="4.1" fill="#ff9900"/>
<circle cx="976.7" cy="556.0" r="4.1" fill="#ff0000"/>
<circle cx="1080.7" cy="556.0" r="4.1" fill="#8800cc"/>
<circle cx="872.8" cy="570.0" r="4.1" fill="#777777"/>
<circle cx="976.7" cy="570.0" r="4.1" fill="#4b8b5a"/>
<circle cx="1080.7" cy="570.0" r="4.1" fill="#bdbd7a"/>
<circle cx="872.8" cy="584.2" r="4.1" fill="#e0107c"/>
</svg>
<svg width="1236" height="886" style="z-index:8">
<path d="M97 659.5 H797.4" stroke="#e8e8e8" stroke-width="1" fill="none"/>
<path d="M97 729.0 H797.4" stroke="#e8e8e8" stroke-width="1" fill="none"/>
<path d="M97 796.5 H797.4" stroke="#e8e8e8" stroke-width="1" fill="none"/>
<path d="M97 864.0 H797.4" stroke="#e8e8e8" stroke-width="1" fill="none"/>
<path d="M103.6 826 L108.7 738.3 L112.1 890" fill="none" stroke="#3ba1c9" stroke-width="1.4"/>
<path d="M249.6 890 L253.5 692.4 L257.7 890" fill="none" stroke="#3ba1c9" stroke-width="1.4"/>
<path d="M677.7 816.8 L696.2 890" fill="none" stroke="#fbe3b4" stroke-width="1.4"/>
<circle cx="677.7" cy="816.8" r="3.6" fill="#fdf0d4"/>
<circle cx="677.7" cy="816.8" r="2.2" fill="#fffdf8"/>
</svg>
<div class="abs" style="left:827px;top:656px;width:375px;height:29px;background:#f1f1f1;z-index:4"></div>
<div class="abs" style="left:827px;top:684.3px;width:375px;height:210px;background:#fff;border:1px solid #c2c2c2;border-right:1.8px solid #c4c4c4;border-top:2.2px solid #c6c6c6;z-index:4"></div>
<div class="abs" style="left:828px;top:686.5px;width:372.2px;height:25.3px;background:linear-gradient(#f9f9f9,#f1f1f1 45%,#e3e3e3);border-bottom:1.7px solid #bdbdbd;z-index:5"></div>
<div class="abs" style="left:828px;top:711.9px;width:33px;height:24px;background:#f5f6f9;z-index:5"></div>
<div class="abs" style="left:828px;top:735.9px;width:373px;height:24px;background:#f0f4fa;z-index:5"></div>
<div class="abs" style="left:828px;top:759.9px;width:33px;height:24px;background:#f5f6f9;z-index:5"></div>
<div class="abs" style="left:828px;top:783.9px;width:373px;height:24px;background:#f0f4fa;z-index:5"></div>
<div class="abs" style="left:828px;top:807.9px;width:33px;height:24px;background:#f5f6f9;z-index:5"></div>
<div class="abs" style="left:828px;top:831.9px;width:373px;height:24px;background:#f0f4fa;z-index:5"></div>
<div class="abs" style="left:828px;top:855.9px;width:33px;height:24px;background:#f5f6f9;z-index:5"></div>
<div class="abs" style="left:828px;top:879.9px;width:373px;height:24px;background:#f0f4fa;z-index:5"></div>
<div class="abs" style="left:860.7px;top:686px;width:1px;height:25px;background:#c3c3c3;z-index:6"></div>
<div class="abs" style="left:860.7px;top:712px;width:2px;height:180px;background:#fff;z-index:6"></div>
<div class="abs" style="left:860.7px;top:712px;width:1px;height:180px;background:#e2e2e2;z-index:6"></div>
<div class="abs" style="left:975.0px;top:686px;width:1px;height:25px;background:#c3c3c3;z-index:6"></div>
<div class="abs" style="left:975.0px;top:712px;width:2px;height:180px;background:#fff;z-index:6"></div>
<div class="abs" style="left:975.0px;top:712px;width:1px;height:180px;background:#e2e2e2;z-index:6"></div>
<div class="abs" style="left:1088.0px;top:686px;width:1px;height:25px;background:#c3c3c3;z-index:6"></div>
<div class="abs" style="left:1088.0px;top:712px;width:2px;height:180px;background:#fff;z-index:6"></div>
<div class="abs" style="left:1088.0px;top:712px;width:1px;height:180px;background:#e2e2e2;z-index:6"></div>
<svg width="1236" height="886" style="z-index:9">
  <circle cx="841.5" cy="669.2" r="2.9" fill="none" stroke="#222244" stroke-width="1.05"/>
  <path d="M843.7 671.4 L846.8 674.6" stroke="#222244" stroke-width="1.25" stroke-linecap="round"/>
  <path d="M893.3 667.9 L900.7 667.9 L897 672 Z" fill="#1b95d0"/>
  <circle cx="1193" cy="670.5" r="4.1" fill="none" stroke="#111133" stroke-width="1.5"/>
  <path d="M1190.2 673.4 L1195.8 667.6" stroke="#111133" stroke-width="1.5"/>
</svg>
<div class="t" id="voss" style="left:72.9px;top:14.3px;font-size:14px;font-weight:normal;color:#fff;letter-spacing:4.365px;">VOSS</div>
<div class="t" id="title" style="left:187.6px;top:16.3px;font-size:15px;font-weight:normal;color:#fff;transform:scaleX(1.0881);transform-origin:0 0;-webkit-text-stroke:0.6px #fff">Netflow - Top Applications</div>
<div class="t" id="admin" style="left:1129.1px;top:20.5px;font-size:16px;font-weight:normal;color:#fff;transform:scaleX(1.0028);transform-origin:0 0;-webkit-text-stroke:0.35px #fff">admin</div>
<div class="t" id="bc1" style="left:26.7px;top:52.6px;font-size:16px;font-weight:normal;color:#000040;transform:scaleX(0.9046);transform-origin:0 0;">1.VOSS</div>
<div class="t" id="bc2" style="left:117.3px;top:52.3px;font-size:16.5px;font-weight:normal;color:#000040;transform:scaleX(1.2844);transform-origin:0 0;">/</div>
<div class="t" id="bc3" style="left:132.9px;top:52.6px;font-size:16px;font-weight:normal;color:#000040;transform:scaleX(1.0091);transform-origin:0 0;">Netflow Packet Analysis</div>
<div class="t" id="days" style="left:1007.8px;top:55.1px;font-size:11.5px;font-weight:bold;color:#12123f;transform:scaleX(0.9817);transform-origin:0 0;">Days remaining: 1823</div>
<div class="t" id="n1" style="left:45.8px;top:86.0px;font-size:12px;font-weight:normal;color:#fff;transform:scaleX(0.9607);transform-origin:0 0;-webkit-text-stroke:0.45px #fff">DS9 - 172.30.42.193</div>
<div class="t" id="n2" style="left:187.3px;top:86.0px;font-size:12px;font-weight:normal;color:#fff;transform:scaleX(0.9873);transform-origin:0 0;-webkit-text-stroke:0.45px #fff">Flow Summary</div>
<div class="t" id="n3" style="left:301.0px;top:86.0px;font-size:12px;font-weight:normal;color:#fff;transform:scaleX(0.9652);transform-origin:0 0;-webkit-text-stroke:0.45px #fff">DS9 - 172.30.42.170</div>
<div class="t" id="n4" style="left:428.7px;top:86.0px;font-size:12px;font-weight:normal;color:#fff;transform:scaleX(0.9987);transform-origin:0 0;-webkit-text-stroke:0.45px #fff">Netflow - Interface Stats</div>
<div class="t" id="n5" style="left:577.5px;top:86.0px;font-size:12px;font-weight:normal;color:#fff;transform:scaleX(1.0190);transform-origin:0 0;-webkit-text-stroke:0.45px #fff">Netflow - Top Applications</div>
<div class="t" id="n6" style="left:737.5px;top:86.0px;font-size:12px;font-weight:normal;color:#fff;transform:scaleX(1.0020);transform-origin:0 0;-webkit-text-stroke:0.45px #fff">Netflow - Top GeoLocations</div>
<div class="t" id="n7" style="left:905.2px;top:86.0px;font-size:12px;font-weight:normal;color:#fff;transform:scaleX(1.0078);transform-origin:0 0;-webkit-text-stroke:0.45px #fff">Netflow - Top Talkers</div>
<div class="t" id="n8" style="left:31.8px;top:114.1px;font-size:12px;font-weight:normal;color:#fff;transform:scaleX(0.9959);transform-origin:0 0;-webkit-text-stroke:0.45px #fff">Netflow Data Analysis Workspace v4</div>
<div class="t" id="n9" style="left:247.0px;top:114.1px;font-size:12px;font-weight:normal;color:#fff;transform:scaleX(1.0083);transform-origin:0 0;-webkit-text-stroke:0.45px #fff">Netflow Interface Utilization Analysis v2</div>
<div class="t" id="gf" style="left:39.1px;top:146.4px;font-size:13.5px;font-weight:normal;color:#000040;transform:scaleX(1.0202);transform-origin:0 0;">Global Filters ( 0 applied )</div>
<div class="t" id="refresh" style="left:709.5px;top:148.3px;font-size:10.5px;font-weight:normal;color:#222;transform:scaleX(0.9143);transform-origin:0 0;font-style:italic">Click to Refresh Data</div>
<div class="t" id="date" style="left:847.4px;top:147.2px;font-size:12px;font-weight:bold;color:#4a4a4a;transform:scaleX(0.9715);transform-origin:0 0;">3 Oct, 2022 2:51 pm - 4 Oct, 2022 2:51 pm</div>
<div class="t" id="utc1" style="left:1173.0px;top:142.2px;font-size:10px;font-weight:normal;color:#1a1a4a;transform:scaleX(0.9143);transform-origin:0 0;">UTC</div>
<div class="t" id="utc2" style="left:1172.7px;top:153.8px;font-size:10px;font-weight:normal;color:#1a1a4a;transform:scaleX(1.0314);transform-origin:0 0;">time</div>
<div class="t" id="pt1" style="left:41.6px;top:183.6px;font-size:13.5px;font-weight:normal;color:#fff;transform:scaleX(1.0468);transform-origin:0 0;-webkit-text-stroke:0.5px #fff;text-shadow:1px 1px 1px rgba(170,170,190,.75)">Top 10 Busiest Interfaces to Process Incoming Traffic</div>
<div class="t" id="pt2" style="left:846.0px;top:183.9px;font-size:13.5px;font-weight:normal;color:#fff;transform:scaleX(1.0436);transform-origin:0 0;-webkit-text-stroke:0.5px #fff;text-shadow:1px 1px 1px rgba(170,170,190,.75)">Top 10 Destination Ports</div>
<div class="t" id="pt3" style="left:55.0px;top:633.9px;font-size:13.5px;font-weight:normal;color:#fff;transform:scaleX(1.0484);transform-origin:0 0;-webkit-text-stroke:0.5px #fff;text-shadow:1px 1px 1px rgba(170,170,190,.75)">Traffic Trend for Top 10 Destination Ports</div>
<div class="t" id="pt4" style="left:832.0px;top:633.5px;font-size:13.5px;font-weight:normal;color:#fff;transform:scaleX(1.0449);transform-origin:0 0;-webkit-text-stroke:0.5px #fff;text-shadow:1px 1px 1px rgba(170,170,190,.75)">Top 10 Destination Port List</div>
<div class="t" id="y1_2500M" style="left:69.5px;top:206.7px;font-size:11px;font-weight:normal;color:#666666;transform:scaleX(0.9808);transform-origin:0 0;">2,500M</div>
<div class="t" id="y1_2000M" style="left:69.5px;top:266.0px;font-size:11px;font-weight:normal;color:#666666;transform:scaleX(0.9808);transform-origin:0 0;">2,000M</div>
<div class="t" id="y1_1500M" style="left:69.5px;top:325.5px;font-size:11px;font-weight:normal;color:#666666;transform:scaleX(0.9808);transform-origin:0 0;">1,500M</div>
<div class="t" id="y1_1000M" style="left:69.5px;top:385.0px;font-size:11px;font-weight:normal;color:#666666;transform:scaleX(0.9808);transform-origin:0 0;">1,000M</div>
<div class="t" id="y1_500M" style="left:78.5px;top:444.7px;font-size:11px;font-weight:normal;color:#666666;transform:scaleX(0.9807);transform-origin:0 0;">500M</div>
<div class="t" id="y1_0" style="left:100.2px;top:504.7px;font-size:11px;font-weight:normal;color:#666666;transform:scaleX(0.8653);transform-origin:0 0;">0</div>
<div class="t" id="x1_1200pm" style="left:164.3px;top:518.9px;font-size:11px;font-weight:normal;color:#666666;transform:scaleX(0.9834);transform-origin:0 0;">12:00pm</div>
<div class="t" id="x1_300pm" style="left:253.3px;top:518.9px;font-size:11px;font-weight:normal;color:#666666;transform:scaleX(0.9972);transform-origin:0 0;">3:00pm</div>
<div class="t" id="x1_600pm" style="left:340.0px;top:518.9px;font-size:11px;font-weight:normal;color:#666666;transform:scaleX(0.9890);transform-origin:0 0;">6:00pm</div>
<div class="t" id="x1_900pm" style="left:426.5px;top:518.9px;font-size:11px;font-weight:normal;color:#666666;transform:scaleX(0.9917);transform-origin:0 0;">9:00pm</div>
<div class="t" id="x1_0410" style="left:516.5px;top:518.9px;font-size:11px;font-weight:normal;color:#666666;transform:scaleX(1.0497);transform-origin:0 0;">04/10</div>
<div class="t" id="x1_300am" style="left:599.5px;top:518.9px;font-size:11px;font-weight:normal;color:#666666;transform:scaleX(0.9808);transform-origin:0 0;">3:00am</div>
<div class="t" id="x1_600am" style="left:685.8px;top:518.9px;font-size:11px;font-weight:normal;color:#666666;transform:scaleX(0.9890);transform-origin:0 0;">6:00am</div>
<div class="t" id="x1_900am" style="left:760.2px;top:518.9px;font-size:11px;font-weight:normal;color:#666666;transform:scaleX(0.9890);transform-origin:0 0;">9:00am</div>
<div class="t" id="l1_0" style="left:123.9px;top:549.4px;font-size:12px;font-weight:bold;color:#333;transform:scaleX(0.9949);transform-origin:0 0;">172.30.255.1 interfac...</div>
<div class="t" id="l1_1" style="left:284.7px;top:549.4px;font-size:12px;font-weight:bold;color:#333;transform:scaleX(0.9980);transform-origin:0 0;">172.30.255.1 interfac...</div>
<div class="t" id="l1_2" style="left:445.5px;top:549.4px;font-size:12px;font-weight:bold;color:#333;transform:scaleX(1.0004);transform-origin:0 0;">172.30.255.1 interfac...</div>
<div class="t" id="l1_3" style="left:606.6px;top:549.4px;font-size:12px;font-weight:bold;color:#333;transform:scaleX(1.0051);transform-origin:0 0;">172.30.42.175 interfa...</div>
<div class="t" id="l1_4" style="left:123.9px;top:563.2px;font-size:12px;font-weight:bold;color:#333;transform:scaleX(0.9949);transform-origin:0 0;">172.30.255.1 interfac...</div>
<div class="t" id="l1_5" style="left:284.7px;top:563.2px;font-size:12px;font-weight:bold;color:#333;transform:scaleX(0.9980);transform-origin:0 0;">172.16.0.100 interfac...</div>
<div class="t" id="l1_6" style="left:445.5px;top:563.2px;font-size:12px;font-weight:bold;color:#333;transform:scaleX(1.0004);transform-origin:0 0;">172.16.0.100 interfac...</div>
<div class="t" id="l1_7" style="left:606.6px;top:563.2px;font-size:12px;font-weight:bold;color:#333;transform:scaleX(1.0051);transform-origin:0 0;">172.30.255.1 interfac...</div>
<div class="t" id="l1_8" style="left:123.9px;top:577.2px;font-size:12px;font-weight:bold;color:#333;transform:scaleX(0.9949);transform-origin:0 0;">172.16.0.100 interfac...</div>
<div class="t" id="l1_9" style="left:284.7px;top:577.2px;font-size:12px;font-weight:bold;color:#333;transform:scaleX(0.9980);transform-origin:0 0;">172.30.255.1 interfac...</div>
<div class="t" id="l2_0" style="left:882.0px;top:535.5px;font-size:12px;font-weight:bold;color:#333;transform:scaleX(0.8991);transform-origin:0 0;">ssh</div>
<div class="t" id="l2_1" style="left:985.9px;top:535.5px;font-size:12px;font-weight:bold;color:#333;transform:scaleX(0.9461);transform-origin:0 0;">shell/syslog</div>
<div class="t" id="l2_2" style="left:1089.8px;top:535.5px;font-size:12px;font-weight:bold;color:#333;transform:scaleX(0.9343);transform-origin:0 0;">https</div>
<div class="t" id="l2_3" style="left:882.0px;top:549.4px;font-size:12px;font-weight:bold;color:#333;transform:scaleX(1.0127);transform-origin:0 0;">62464</div>
<div class="t" id="l2_4" style="left:985.9px;top:549.4px;font-size:12px;font-weight:bold;color:#333;transform:scaleX(1.0127);transform-origin:0 0;">10443</div>
<div class="t" id="l2_5" style="left:1089.8px;top:549.4px;font-size:12px;font-weight:bold;color:#333;transform:scaleX(1.0247);transform-origin:0 0;">54773</div>
<div class="t" id="l2_6" style="left:882.0px;top:563.4px;font-size:12px;font-weight:bold;color:#333;transform:scaleX(1.0127);transform-origin:0 0;">57368</div>
<div class="t" id="l2_7" style="left:985.9px;top:563.4px;font-size:12px;font-weight:bold;color:#333;transform:scaleX(0.9599);transform-origin:0 0;">zabbix-agent</div>
<div class="t" id="l2_8" style="left:1089.8px;top:563.4px;font-size:12px;font-weight:bold;color:#333;transform:scaleX(0.9548);transform-origin:0 0;">microsoft-ds</div>
<div class="t" id="l2_9" style="left:882.0px;top:577.6px;font-size:12px;font-weight:bold;color:#333;transform:scaleX(0.9183);transform-origin:0 0;">snmp</div>
<div class="t" id="dl_0" style="left:1117.2px;top:380.7px;font-size:11px;font-weight:bold;color:#000;transform:scaleX(0.8962);transform-origin:0 0;text-shadow:1px 0 0 #fff,-1px 0 0 #fff,0 1px 0 #fff,0 -1px 0 #fff,1px 1px 0 #fff,-1px -1px 0 #fff,1px -1px 0 #fff,-1px 1px 0 #fff">ssh</div>
<div class="t" id="dl_1" style="left:1117.2px;top:394.9px;font-size:11px;font-weight:bold;color:#000;transform:scaleX(0.9702);transform-origin:0 0;text-shadow:1px 0 0 #fff,-1px 0 0 #fff,0 1px 0 #fff,0 -1px 0 #fff,1px 1px 0 #fff,-1px -1px 0 #fff,1px -1px 0 #fff,-1px 1px 0 #fff">56.49%</div>
<div class="t" id="dl_2" style="left:853.9px;top:410.7px;font-size:11px;font-weight:bold;color:#000;transform:scaleX(0.9510);transform-origin:0 0;text-shadow:1px 0 0 #fff,-1px 0 0 #fff,0 1px 0 #fff,0 -1px 0 #fff,1px 1px 0 #fff,-1px -1px 0 #fff,1px -1px 0 #fff,-1px 1px 0 #fff">shell/syslog</div>
<div class="t" id="dl_3" style="left:853.9px;top:425.0px;font-size:11px;font-weight:bold;color:#000;transform:scaleX(0.9782);transform-origin:0 0;text-shadow:1px 0 0 #fff,-1px 0 0 #fff,0 1px 0 #fff,0 -1px 0 #fff,1px 1px 0 #fff,-1px -1px 0 #fff,1px -1px 0 #fff,-1px 1px 0 #fff">19.90%</div>
<div class="t" id="dl_4" style="left:870.1px;top:371.5px;font-size:11px;font-weight:bold;color:#000;transform:scaleX(0.9334);transform-origin:0 0;text-shadow:1px 0 0 #fff,-1px 0 0 #fff,0 1px 0 #fff,0 -1px 0 #fff,1px 1px 0 #fff,-1px -1px 0 #fff,1px -1px 0 #fff,-1px 1px 0 #fff">https</div>
<div class="t" id="dl_5" style="left:870.1px;top:385.7px;font-size:11px;font-weight:bold;color:#000;transform:scaleX(0.9646);transform-origin:0 0;text-shadow:1px 0 0 #fff,-1px 0 0 #fff,0 1px 0 #fff,0 -1px 0 #fff,1px 1px 0 #fff,-1px -1px 0 #fff,1px -1px 0 #fff,-1px 1px 0 #fff">5.92%</div>
<div class="t" id="dl_6" style="left:870.8px;top:334.7px;font-size:11px;font-weight:bold;color:#000;transform:scaleX(1.0296);transform-origin:0 0;text-shadow:1px 0 0 #fff,-1px 0 0 #fff,0 1px 0 #fff,0 -1px 0 #fff,1px 1px 0 #fff,-1px -1px 0 #fff,1px -1px 0 #fff,-1px 1px 0 #fff">62464</div>
<div class="t" id="dl_7" style="left:870.8px;top:348.7px;font-size:11px;font-weight:bold;color:#000;transform:scaleX(0.9743);transform-origin:0 0;text-shadow:1px 0 0 #fff,-1px 0 0 #fff,0 1px 0 #fff,0 -1px 0 #fff,1px 1px 0 #fff,-1px -1px 0 #fff,1px -1px 0 #fff,-1px 1px 0 #fff">5.65%</div>
<div class="t" id="dl_8" style="left:890.0px;top:297.7px;font-size:11px;font-weight:bold;color:#000;transform:scaleX(1.0198);transform-origin:0 0;text-shadow:1px 0 0 #fff,-1px 0 0 #fff,0 1px 0 #fff,0 -1px 0 #fff,1px 1px 0 #fff,-1px -1px 0 #fff,1px -1px 0 #fff,-1px 1px 0 #fff">10443</div>
<div class="t" id="dl_9" style="left:890.0px;top:311.7px;font-size:11px;font-weight:bold;color:#000;transform:scaleX(0.9679);transform-origin:0 0;text-shadow:1px 0 0 #fff,-1px 0 0 #fff,0 1px 0 #fff,0 -1px 0 #fff,1px 1px 0 #fff,-1px -1px 0 #fff,1px -1px 0 #fff,-1px 1px 0 #fff">3.56%</div>
<div class="t" id="dl_10" style="left:922.2px;top:260.7px;font-size:11px;font-weight:bold;color:#000;transform:scaleX(1.0198);transform-origin:0 0;text-shadow:1px 0 0 #fff,-1px 0 0 #fff,0 1px 0 #fff,0 -1px 0 #fff,1px 1px 0 #fff,-1px -1px 0 #fff,1px -1px 0 #fff,-1px 1px 0 #fff">54773</div>
<div class="t" id="dl_11" style="left:922.2px;top:274.7px;font-size:11px;font-weight:bold;color:#000;transform:scaleX(0.9550);transform-origin:0 0;text-shadow:1px 0 0 #fff,-1px 0 0 #fff,0 1px 0 #fff,0 -1px 0 #fff,1px 1px 0 #fff,-1px -1px 0 #fff,1px -1px 0 #fff,-1px 1px 0 #fff">1.97%</div>
<div class="t" id="y3_2000M" style="left:45.9px;top:657.2px;font-size:11px;font-weight:normal;color:#666666;transform:scaleX(0.9808);transform-origin:0 0;">2,000M</div>
<div class="t" id="y3_1500M" style="left:45.9px;top:724.2px;font-size:11px;font-weight:normal;color:#666666;transform:scaleX(0.9808);transform-origin:0 0;">1,500M</div>
<div class="t" id="y3_1000M" style="left:45.9px;top:791.7px;font-size:11px;font-weight:normal;color:#666666;transform:scaleX(0.9808);transform-origin:0 0;">1,000M</div>
<div class="t" id="y3_500M" style="left:54.4px;top:859.1px;font-size:11px;font-weight:normal;color:#666666;transform:scaleX(0.9989);transform-origin:0 0;">500M</div>
<div class="t" id="search" style="left:854.0px;top:663.3px;font-size:13px;font-weight:normal;color:#1c1c44;transform:scaleX(0.8786);transform-origin:0 0;">Search</div>
<div class="t" id="th1" style="left:866.1px;top:692.9px;font-size:12px;font-weight:normal;color:#222;transform:scaleX(0.9387);transform-origin:0 0;">destport</div>
<div class="t" id="th2" style="left:979.2px;top:692.9px;font-size:12px;font-weight:normal;color:#222;transform:scaleX(0.9213);transform-origin:0 0;">totalbytes (Sum)</div>
<div class="t" id="th3" style="left:1092.0px;top:692.9px;font-size:12px;font-weight:normal;color:#222;transform:scaleX(0.9293);transform-origin:0 0;">totalpkts (Sum)</div>
<div class="t" id="r0n" style="left:848.3px;top:717.0px;font-size:13px;font-weight:normal;color:#555555;transform:scaleX(0.8294);transform-origin:0 0;">1</div>
<div class="t" id="r0d" style="left:866.4px;top:717.0px;font-size:13px;font-weight:normal;color:#555555;transform:scaleX(0.8995);transform-origin:0 0;">ssh</div>
<div class="t" id="r0b" style="left:1028.7px;top:717.0px;font-size:13px;font-weight:normal;color:#555555;transform:scaleX(0.8785);transform-origin:0 0;">8.4 GBytes</div>
<div class="t" id="r0p" style="left:1154.2px;top:717.0px;font-size:13px;font-weight:normal;color:#555555;transform:scaleX(0.9173);transform-origin:0 0;">101.0 M</div>
<div class="t" id="r1n" style="left:848.3px;top:741.2px;font-size:13px;font-weight:normal;color:#555555;transform:scaleX(0.8294);transform-origin:0 0;">2</div>
<div class="t" id="r1d" style="left:866.4px;top:741.2px;font-size:13px;font-weight:normal;color:#555555;transform:scaleX(0.9523);transform-origin:0 0;">shell/syslog</div>
<div class="t" id="r1b" style="left:1028.7px;top:741.2px;font-size:13px;font-weight:normal;color:#555555;transform:scaleX(0.8785);transform-origin:0 0;">2.9 GBytes</div>
<div class="t" id="r1p" style="left:1168.0px;top:741.2px;font-size:13px;font-weight:normal;color:#555555;transform:scaleX(0.9011);transform-origin:0 0;">1.6 M</div>
<div class="t" id="r2n" style="left:848.3px;top:765.1px;font-size:13px;font-weight:normal;color:#555555;transform:scaleX(0.8294);transform-origin:0 0;">3</div>
<div class="t" id="r2d" style="left:866.4px;top:765.1px;font-size:13px;font-weight:normal;color:#555555;transform:scaleX(0.9437);transform-origin:0 0;">https</div>
<div class="t" id="r2b" style="left:1012.5px;top:765.1px;font-size:13px;font-weight:normal;color:#555555;transform:scaleX(0.9145);transform-origin:0 0;">883.6 MBytes</div>
<div class="t" id="r2p" style="left:1161.0px;top:765.1px;font-size:13px;font-weight:normal;color:#555555;transform:scaleX(0.9132);transform-origin:0 0;">65.9 M</div>
<div class="t" id="r3n" style="left:848.3px;top:788.9px;font-size:13px;font-weight:normal;color:#555555;transform:scaleX(0.8294);transform-origin:0 0;">4</div>
<div class="t" id="r3d" style="left:866.4px;top:788.9px;font-size:13px;font-weight:normal;color:#555555;transform:scaleX(0.9238);transform-origin:0 0;">62464</div>
<div class="t" id="r3b" style="left:1012.5px;top:788.9px;font-size:13px;font-weight:normal;color:#555555;transform:scaleX(0.9145);transform-origin:0 0;">843.9 MBytes</div>
<div class="t" id="r3p" style="left:1157.6px;top:788.9px;font-size:13px;font-weight:normal;color:#555555;transform:scaleX(0.8856);transform-origin:0 0;">345.6 K</div>
<div class="t" id="r4n" style="left:848.3px;top:813.4px;font-size:13px;font-weight:normal;color:#555555;transform:scaleX(0.8294);transform-origin:0 0;">5</div>
<div class="t" id="r4d" style="left:866.4px;top:813.4px;font-size:13px;font-weight:normal;color:#555555;transform:scaleX(0.9238);transform-origin:0 0;">10443</div>
<div class="t" id="r4b" style="left:1012.5px;top:813.4px;font-size:13px;font-weight:normal;color:#555555;transform:scaleX(0.9145);transform-origin:0 0;">531.0 MBytes</div>
<div class="t" id="r4p" style="left:1168.0px;top:813.4px;font-size:13px;font-weight:normal;color:#555555;transform:scaleX(0.9011);transform-origin:0 0;">1.1 M</div>
<div class="t" id="r5n" style="left:848.3px;top:837.3px;font-size:13px;font-weight:normal;color:#555555;transform:scaleX(0.8294);transform-origin:0 0;">6</div>
<div class="t" id="r5d" style="left:866.4px;top:837.3px;font-size:13px;font-weight:normal;color:#555555;transform:scaleX(0.9238);transform-origin:0 0;">54773</div>
<div class="t" id="r5b" style="left:1012.5px;top:837.3px;font-size:13px;font-weight:normal;color:#555555;transform:scaleX(0.9145);transform-origin:0 0;">294.1 MBytes</div>
<div class="t" id="r5p" style="left:1157.6px;top:837.3px;font-size:13px;font-weight:normal;color:#555555;transform:scaleX(0.9052);transform-origin:0 0;">114.9 K</div>
<div class="t" id="r6n" style="left:848.3px;top:861.2px;font-size:13px;font-weight:normal;color:#555555;transform:scaleX(0.8294);transform-origin:0 0;">7</div>
<div class="t" id="r6d" style="left:866.4px;top:861.2px;font-size:13px;font-weight:normal;color:#555555;transform:scaleX(0.9238);transform-origin:0 0;">57368</div>
<div class="t" id="r6b" style="left:1012.5px;top:861.2px;font-size:13px;font-weight:normal;color:#555555;transform:scaleX(0.9145);transform-origin:0 0;">289.0 MBytes</div>
<div class="t" id="r6p" style="left:1157.6px;top:861.2px;font-size:13px;font-weight:normal;color:#555555;transform:scaleX(0.8856);transform-origin:0 0;">104.1 K</div>

<div class="abs" style="left:1220px;top:41px;width:16px;height:843px;background:#f1f1f1;z-index:30"></div>
<div class="abs" style="left:1222.4px;top:58px;width:12.6px;height:478.5px;background:#c1c1c1;z-index:31"></div>
<svg width="1236" height="886" style="z-index:40">
  <path d="M1224.8 52.6 L1228.5 48.6 L1232.2 52.6 Z" fill="#a3a3a3"/>
  <path d="M1224.8 874 L1232.2 874 L1228.5 878 Z" fill="#505050"/>
</svg>
<div class="abs" style="left:0;top:0;width:1px;height:886px;background:linear-gradient(#2d8fb5,#1f7fa3);z-index:50"></div>
<div class="abs" style="left:0;top:0;width:1236px;height:1px;background:#5a8fc8;z-index:51"></div>
<div class="abs" style="left:1px;top:884px;width:1235px;height:1px;background:rgba(255,255,255,.55);z-index:51"></div>
<div class="abs" style="left:0;top:885px;width:1236px;height:1px;background:linear-gradient(90deg,#1d79a4,#1b72a0 55%,#15568e 90%);z-index:52"></div>
</body>
</html>
